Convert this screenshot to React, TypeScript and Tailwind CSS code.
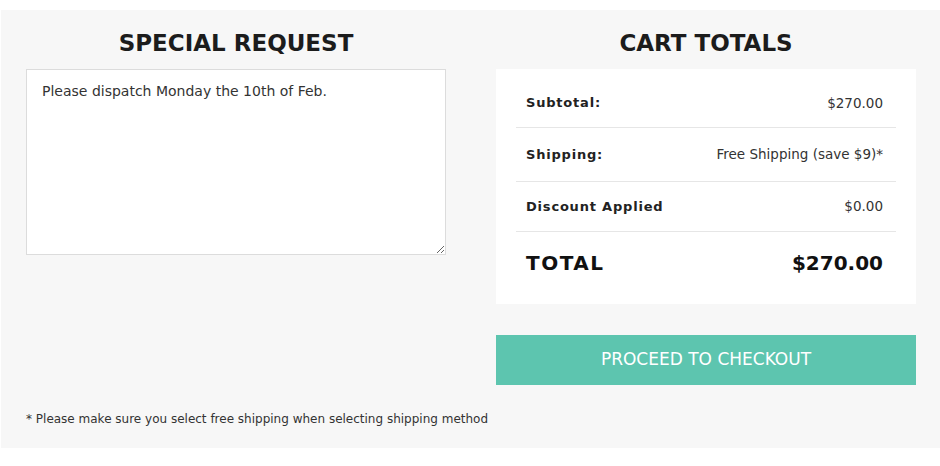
const font = { fontFamily: '"DejaVu Sans", "Liberation Sans", sans-serif' };

function Row({ label, value, h, last }: { label: string; value: string; h: string; last?: boolean }) {
  return (
    <div className={`flex items-center justify-between pl-[10px] pr-[13px] ${h} ${last ? "" : "border-b border-[#e6e6e6]"}`}>
      <span className="text-[13px] font-semibold tracking-[0.8px] text-[#222]">{label}</span>
      <span className="text-[13.5px] text-[#333]">{value}</span>
    </div>
  );
}

export default function App() {
  return (
    <div className="h-[466px] w-[940px] bg-white pt-[10px]" style={font}>
      <div className="ml-[1px] h-[438px] bg-[#f7f7f7] pl-[25px] pr-[24px]">
        <div className="grid grid-cols-2 gap-[50px]">
          {/* Special request */}
          <div>
            <h2 className="flex h-[59px] items-center justify-center pt-[7px] text-[23px] font-bold text-[#1c1c1c]">
              SPECIAL REQUEST
            </h2>
            <textarea
              className="block h-[186px] w-full resize-y border border-[#dcdcdc] bg-white px-[15px] pt-[11px] pb-[10px] text-[14px] leading-[20px] text-[#333] outline-none"
              defaultValue="Please dispatch Monday the 10th of Feb."
            />
          </div>

          {/* Cart totals */}
          <div>
            <h2 className="flex h-[59px] items-center justify-center pt-[7px] text-[23px] font-bold text-[#1c1c1c]">
              CART TOTALS
            </h2>
            <div className="bg-white px-[20px] pt-[10px] pb-[10px]">
              <Row label="Subtotal:" value="$270.00" h="h-[49px]" />
              <Row label="Shipping:" value="Free Shipping (save $9)*" h="h-[54px]" />
              <Row label="Discount Applied" value="$0.00" h="h-[50px]" />
              <div className="flex h-[62px] items-center justify-between pl-[10px] pr-[13px] text-[20px] font-bold text-[#111]">
                <span className="tracking-[1.5px]">TOTAL</span>
                <span>$270.00</span>
              </div>
            </div>
            <button className="mt-[31px] flex h-[50px] w-full items-center justify-center bg-[#5dc5af] text-[17px] font-normal text-white">
              PROCEED TO CHECKOUT
            </button>
          </div>
        </div>
        <p className="mt-[25px] text-[12px] text-[#333]">
          * Please make sure you select free shipping when selecting shipping method
        </p>
      </div>
    </div>
  );
}
